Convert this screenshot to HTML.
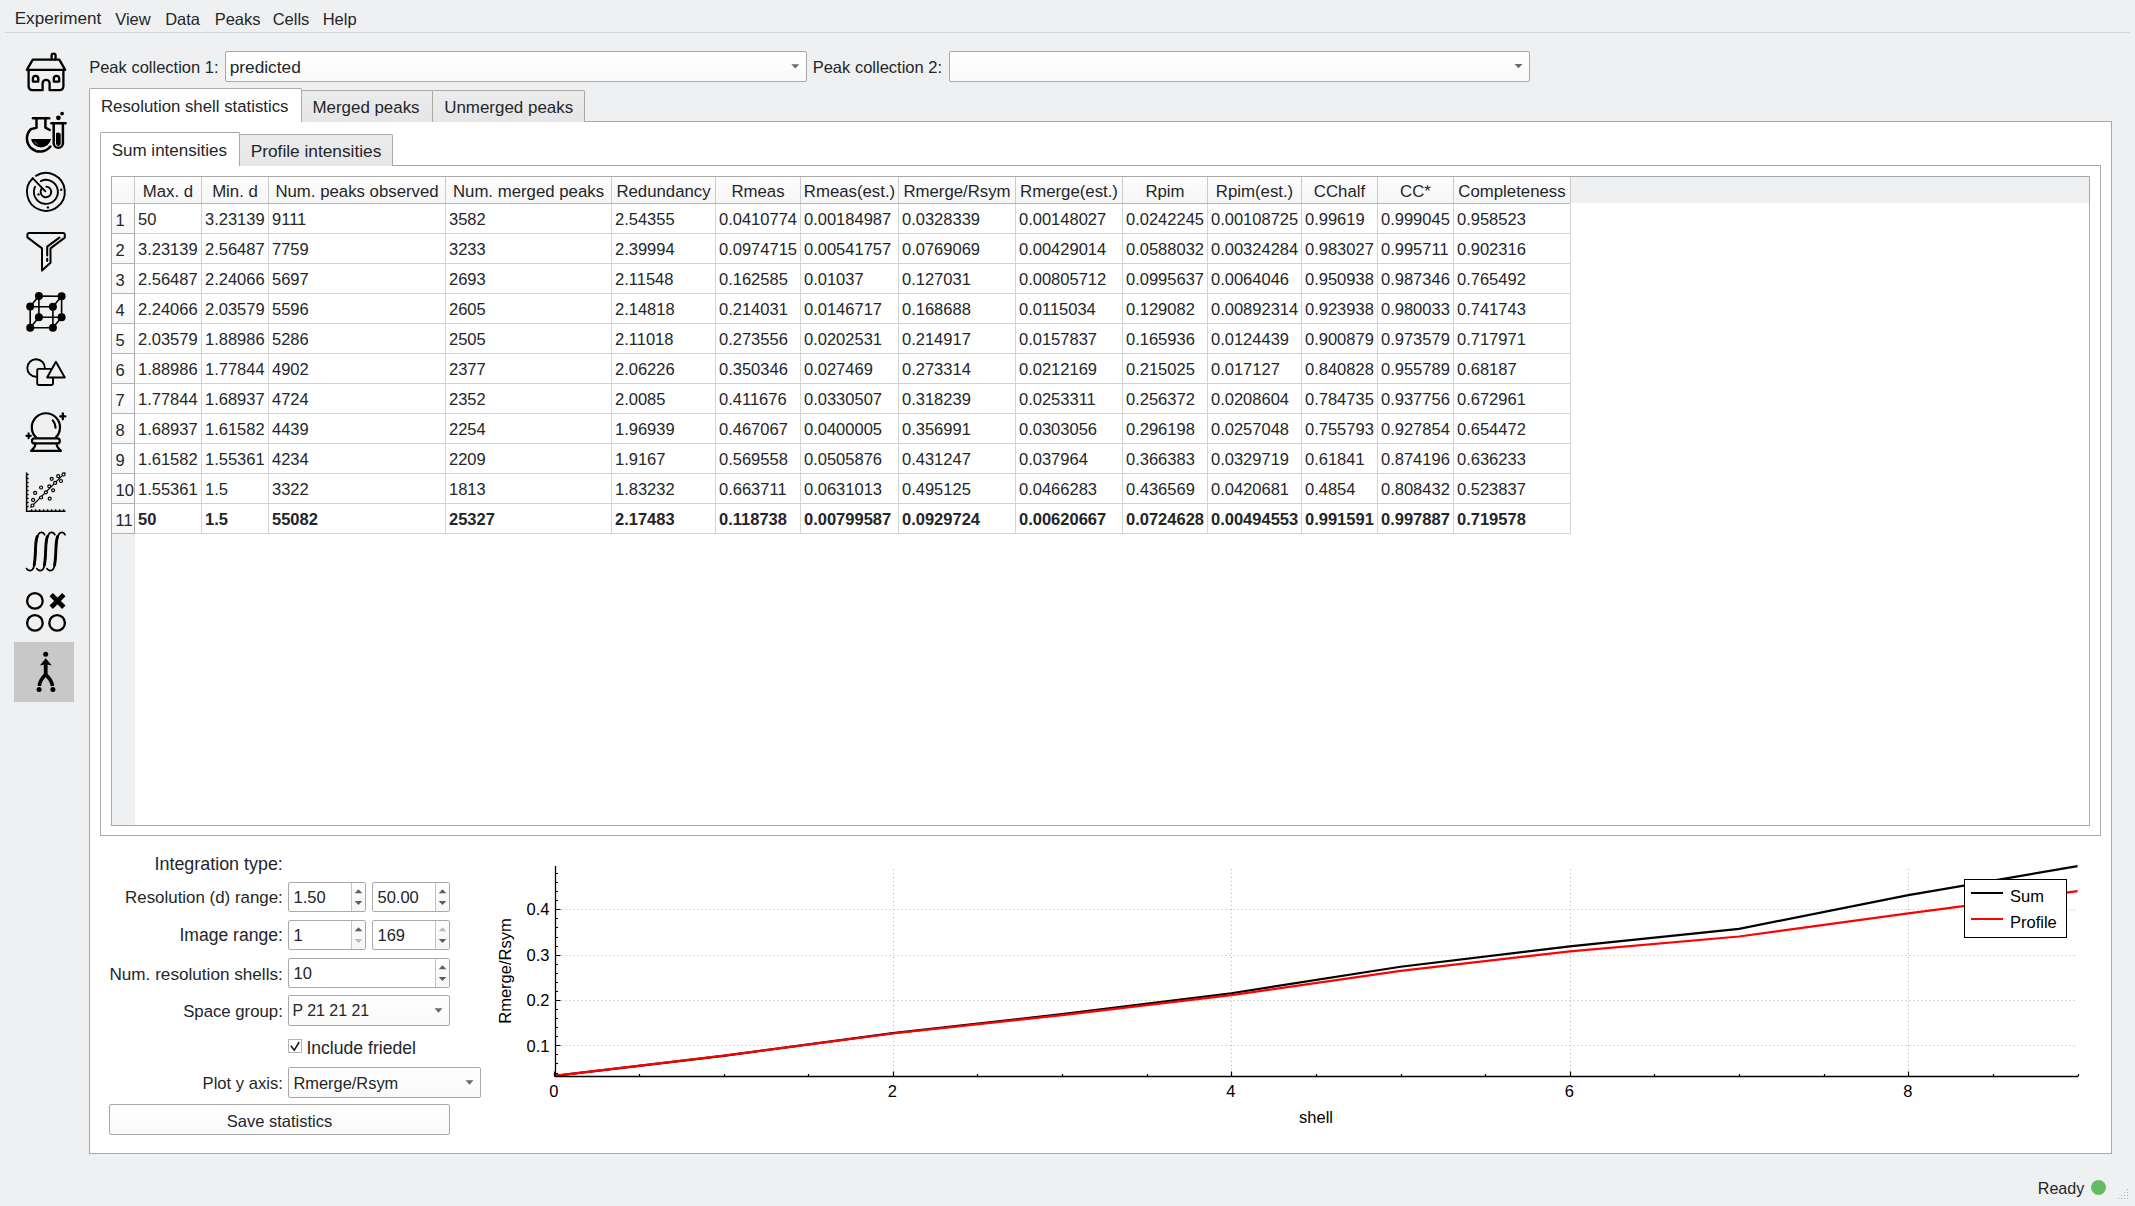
<!DOCTYPE html>
<html><head><meta charset="utf-8"><style>
html,body{margin:0;padding:0;}
body{width:2135px;height:1206px;position:relative;overflow:hidden;background:#eff0f1;font-family:"Liberation Sans",sans-serif;font-size:16.5px;color:#232629;}
.t{position:absolute;white-space:nowrap;line-height:20px;}
.combo{position:absolute;box-sizing:border-box;border:1px solid #a9a9a9;border-radius:2px;background:linear-gradient(#ffffff,#f9f9f9);}
.spin{position:absolute;box-sizing:border-box;border:1px solid #a9a9a9;border-radius:2px;background:#fff;}
.tab{position:absolute;box-sizing:border-box;border:1px solid #a9a9a9;border-bottom:none;border-radius:2px 2px 0 0;background:linear-gradient(#ececec,#e6e6e6);}
.tabsel{position:absolute;box-sizing:border-box;border:1px solid #a9a9a9;border-bottom:none;border-radius:2px 2px 0 0;background:#fff;}
</style></head><body>
<div class="t" style="left:14.70px;top:9.05px;font-size:17.1px;">Experiment</div>
<div class="t" style="left:115.20px;top:9.25px;">View</div>
<div class="t" style="left:165.20px;top:9.25px;">Data</div>
<div class="t" style="left:214.70px;top:9.25px;">Peaks</div>
<div class="t" style="left:272.70px;top:9.25px;">Cells</div>
<div class="t" style="left:322.70px;top:9.25px;">Help</div>
<div style="position:absolute;left:5px;top:32px;width:2125px;height:1px;background:#d5d6d7;"></div>
<div style="position:absolute;left:14px;top:642px;width:60px;height:60px;background:#c8c8c8;"></div>
<svg style="position:absolute;left:0;top:0;overflow:visible" width="90" height="720" viewBox="0 0 90 720"><g fill="none" stroke="#000" stroke-linecap="round" stroke-linejoin="round" stroke-width="2.3"><path d="M32.8 59.6 H59.3 L65.2 69.8 H26.8 Z"/><path d="M51.6 59.4 V55.6 A2 2 0 0 1 55.6 55.6 V59.4"/><path d="M28.6 70 V86.6 A3.6 3.6 0 0 0 32.2 90.2 H42.6 V83.3 A3.5 3.5 0 0 1 49.6 83.3 V90.2 H59.8 A3.6 3.6 0 0 0 63.4 86.6 V70"/><path d="M32.9 81.6 V78.6 A2.7 2.7 0 0 1 38.3 78.6 V81.6 Z"/><path d="M53.8 81.6 V78.6 A2.7 2.7 0 0 1 59.2 78.6 V81.6 Z"/></g><g fill="none" stroke="#000" stroke-linecap="round" stroke-linejoin="round" stroke-width="2.5"><path d="M33 118.2 H49.2"/><path d="M36.5 118.4 V127.7 L30.9 129.1 A13.1 13.1 0 1 0 50.4 146.5"/><path d="M45.4 118.4 V127.6 L49.8 130"/><path d="M51.4 123.2 H65.6"/><path d="M53.7 123.4 V143.2 A4.6 4.6 0 0 0 62.9 143.2 V123.4"/></g><path d="M31.1 138.9 H51 A10.06 10.06 0 0 1 31.1 138.9 Z" fill="#000"/><path d="M34.3 141.5 L37.6 144.5" stroke="#9a9a9a" stroke-width="0.8" fill="none"/><path d="M56 133.2 Q58 131.8 60.7 133.8 V143.6 A2.35 2.35 0 0 1 56 143.6 Z" fill="#000"/><circle cx="58.4" cy="117.8" r="2.4" fill="#000"/><circle cx="62.1" cy="113.6" r="1.9" fill="#000"/><g fill="none" stroke="#000" stroke-linecap="round" stroke-linejoin="round" stroke-width="1.9"><path d="M35.88 175.87 A18.9 18.9 0 1 1 32.77 178.30"/><path d="M40.83 181.02 A12 12 0 1 1 35.02 186.83"/><path d="M46.36 186.62 A5.3 5.3 0 1 1 41.41 189.09"/><path d="M32.6 178.2 L45.4 191.3"/></g><circle cx="61.2" cy="189.8" r="1.2" fill="#000"/><circle cx="38.5" cy="194.4" r="1.2" fill="#000"/><circle cx="47.9" cy="207.4" r="1.2" fill="#000"/><g fill="none" stroke="#000" stroke-linecap="round" stroke-linejoin="round" stroke-width="2"><path d="M28.8 233.1 H63.4 Q64.8 233.1 64.8 234.6 V237.6 L50.5 248.4 V262.8 L42 270.6 V248.4 L27.4 237.4 V234.6 Q27.4 233.1 28.8 233.1 Z"/><path d="M59.4 237.6 L47.2 246.6 V255.4"/><path d="M47.2 258.8 V261"/></g><path d="M38.9 296.1 L61.6 296.2 M30.2 306.6 L52.9 306.7 M38.9 296.1 L38.9 317.2 M30.2 306.6 L30.2 327.7 M61.6 296.2 L61.6 317.3 M52.9 306.7 L52.9 327.8 M38.9 317.2 L61.6 317.3 M30.2 327.7 L52.9 327.8 M38.9 296.1 L30.2 306.6 M61.6 296.2 L52.9 306.7 M38.9 317.2 L30.2 327.7 M61.6 317.3 L52.9 327.8" stroke="#000" stroke-width="1.6" fill="none"/><circle cx="38.9" cy="296.1" r="4" fill="#000"/><circle cx="61.6" cy="296.2" r="4" fill="#000"/><circle cx="38.9" cy="317.2" r="4" fill="#000"/><circle cx="61.6" cy="317.3" r="4" fill="#000"/><circle cx="30.2" cy="306.6" r="4" fill="#000"/><circle cx="52.9" cy="306.7" r="4" fill="#000"/><circle cx="30.2" cy="327.7" r="4" fill="#000"/><circle cx="52.9" cy="327.8" r="4" fill="#000"/><g fill="none" stroke="#000" stroke-linecap="round" stroke-linejoin="round" stroke-width="1.9"><path d="M36.1 376.8 A8.8 8.8 0 1 1 44.9 368.2"/><path d="M50.4 368.9 H38.6 Q37.2 368.9 37.2 370.3 V383.6 Q37.2 385 38.6 385 H51.6 Q53 385 53 383.6 V377.6"/><path d="M55.9 361.8 L64.8 377.5 H47.1 Z"/></g><g fill="none" stroke="#000" stroke-linecap="round" stroke-linejoin="round" stroke-width="2.2"><path d="M36.2 437.6 A14.1 14.1 0 1 1 55.6 437.6"/><rect x="32" y="438.4" width="27.8" height="5" rx="2.5"/><path d="M35.4 443.6 Q35.4 447.6 31 450.8 H61 Q56.6 447.6 56.6 443.6"/><path d="M52.8 420.4 Q55.2 423.2 55.6 427.6"/><path d="M62.8 413.3 V419.3 M60.2 416.3 H65.4" stroke-width="2.3"/><path d="M28.6 433.4 V438.3 M26.4 435.85 H30.8" stroke-width="2.1"/></g><path d="M26.6 472.4 V511.2 H65.6 M26.6 474.4 H28.6 M31.6 511 V509.2 M26.6 478.4 H28.6 M35.6 511 V509.2 M26.6 482.4 H28.6 M39.6 511 V509.2 M26.6 486.4 H28.6 M43.6 511 V509.2 M26.6 490.4 H28.6 M47.6 511 V509.2 M26.6 494.4 H28.6 M51.6 511 V509.2 M26.6 498.4 H28.6 M55.6 511 V509.2 M26.6 502.4 H28.6 M59.6 511 V509.2 M26.6 506.4 H28.6 M63.6 511 V509.2" stroke="#000" stroke-width="1.5" fill="none"/><path d="M30.4 507.6 L65.2 472.6" stroke="#000" stroke-width="1.3" fill="none"/><circle cx="32.5" cy="505.5" r="1.5" fill="#eff0f1" stroke="#000" stroke-width="1.2"/><circle cx="33.1" cy="499.9" r="1.5" fill="#eff0f1" stroke="#000" stroke-width="1.2"/><circle cx="35.1" cy="492.9" r="1.5" fill="#eff0f1" stroke="#000" stroke-width="1.2"/><circle cx="41.1" cy="487.5" r="1.5" fill="#eff0f1" stroke="#000" stroke-width="1.2"/><circle cx="41.1" cy="497.5" r="1.5" fill="#eff0f1" stroke="#000" stroke-width="1.2"/><circle cx="45.9" cy="492.3" r="1.5" fill="#eff0f1" stroke="#000" stroke-width="1.2"/><circle cx="49.3" cy="486.3" r="1.5" fill="#eff0f1" stroke="#000" stroke-width="1.2"/><circle cx="49.7" cy="498.7" r="1.5" fill="#eff0f1" stroke="#000" stroke-width="1.2"/><circle cx="51.7" cy="478.8" r="1.5" fill="#eff0f1" stroke="#000" stroke-width="1.2"/><circle cx="53.1" cy="490.3" r="1.5" fill="#eff0f1" stroke="#000" stroke-width="1.2"/><circle cx="55.1" cy="482.9" r="1.5" fill="#eff0f1" stroke="#000" stroke-width="1.2"/><circle cx="58.2" cy="476.2" r="1.5" fill="#eff0f1" stroke="#000" stroke-width="1.2"/><circle cx="61" cy="481" r="1.5" fill="#eff0f1" stroke="#000" stroke-width="1.2"/><circle cx="63.6" cy="474.4" r="1.5" fill="#eff0f1" stroke="#000" stroke-width="1.2"/><g fill="none" stroke="#000" stroke-linecap="round"><path transform="translate(0 0)" d="M26.6 568.6 C27.8 570.6 30.8 571.4 32.6 569.4 C34.6 567 35.2 561 35.5 552 C35.8 543 36.4 537.2 38.6 534 C40.4 531.6 43.2 531.8 44.6 534.6" stroke-width="1.8"/><path transform="translate(0 0)" d="M34.2 565 C35.1 560 35.4 553 35.6 547 C35.8 542 36.3 539 37.2 536.6" stroke-width="2.9"/><path transform="translate(10.2 0)" d="M26.6 568.6 C27.8 570.6 30.8 571.4 32.6 569.4 C34.6 567 35.2 561 35.5 552 C35.8 543 36.4 537.2 38.6 534 C40.4 531.6 43.2 531.8 44.6 534.6" stroke-width="1.8"/><path transform="translate(10.2 0)" d="M34.2 565 C35.1 560 35.4 553 35.6 547 C35.8 542 36.3 539 37.2 536.6" stroke-width="2.9"/><path transform="translate(20.4 0)" d="M26.6 568.6 C27.8 570.6 30.8 571.4 32.6 569.4 C34.6 567 35.2 561 35.5 552 C35.8 543 36.4 537.2 38.6 534 C40.4 531.6 43.2 531.8 44.6 534.6" stroke-width="1.8"/><path transform="translate(20.4 0)" d="M34.2 565 C35.1 560 35.4 553 35.6 547 C35.8 542 36.3 539 37.2 536.6" stroke-width="2.9"/></g><g fill="none" stroke="#000" stroke-width="2.3"><circle cx="34.9" cy="600.9" r="7.8"/><circle cx="34.9" cy="622.9" r="7.8"/><circle cx="57.1" cy="622.9" r="7.8"/></g><path d="M51.2 594.6 L63.8 607.2 M63.8 594.6 L51.2 607.2" stroke="#000" stroke-width="4.8" fill="none"/><circle cx="45.7" cy="654.3" r="2.5" fill="#000"/><path d="M45.7 658.2 L51.8 665.4 L45.7 664.2 L39.9 665.4 Z" fill="#000"/><path d="M45.7 663.5 V676.5" stroke="#000" stroke-width="3.8" fill="none"/><path d="M45.7 674.6 Q39.6 680 39.4 686 M45.7 674.6 Q51.8 680 52.4 686" stroke="#000" stroke-width="3.6" fill="none"/><circle cx="39.1" cy="689.4" r="2.5" fill="#000"/><circle cx="52.9" cy="689.4" r="2.5" fill="#000"/></svg>
<div class="t" style="left:89.20px;top:56.85px;">Peak collection 1:</div>
<div class="combo" style="left:225px;top:51px;width:582px;height:31px;"></div>
<div class="t" style="left:229.70px;top:57.28px;font-size:17.3px;">predicted</div>
<div class="t" style="left:812.70px;top:56.85px;">Peak collection 2:</div>
<div class="combo" style="left:949px;top:51px;width:581px;height:31px;"></div>
<svg style="position:absolute;left:0;top:0;overflow:visible" width="1" height="1"><path d="M791.3 64.2 L799.3 64.2 L795.3 68.5 Z" fill="#6a6a6a"/><path d="M1514.5 64 L1522.5 64 L1518.5 68.3 Z" fill="#6a6a6a"/></svg>
<div style="position:absolute;left:89px;top:121px;width:2023px;height:1033px;box-sizing:border-box;border:1px solid #a9a9a9;background:#fff;"></div>
<div class="tab" style="left:301px;top:90px;width:132px;height:32px;"></div>
<div class="tab" style="left:432px;top:90px;width:153px;height:32px;"></div>
<div class="tabsel" style="left:89px;top:88px;width:213px;height:34px;"></div>
<div class="t" style="left:101.00px;top:96.75px;font-size:16.8px;">Resolution shell statistics</div>
<div class="t" style="left:312.50px;top:97.71px;font-size:16.9px;">Merged peaks</div>
<div class="t" style="left:444.20px;top:97.70px;font-size:16.95px;">Unmerged peaks</div>
<div style="position:absolute;left:100px;top:165px;width:2001px;height:671px;box-sizing:border-box;border:1px solid #a9a9a9;background:#fff;"></div>
<div class="tab" style="left:239px;top:134px;width:154px;height:32px;"></div>
<div class="tabsel" style="left:100px;top:132px;width:140px;height:34px;"></div>
<div class="t" style="left:111.70px;top:140.98px;font-size:17px;">Sum intensities</div>
<div class="t" style="left:250.70px;top:141.28px;font-size:17.3px;">Profile intensities</div>
<div style="position:absolute;left:111px;top:176px;width:1979px;height:650px;box-sizing:border-box;border:1px solid #a9a9a9;background:#fff;"></div>
<div style="position:absolute;left:112px;top:177px;width:1977px;height:26px;background:#eff0f1;"></div>
<div style="position:absolute;left:112px;top:534px;width:23px;height:291px;background:#eff0f1;"></div>
<div style="position:absolute;left:112px;top:177px;width:23px;height:26px;box-sizing:border-box;background:linear-gradient(#fdfdfd,#f6f6f6);border-right:1px solid #cbcbcb;"></div>
<div style="position:absolute;left:135px;top:177px;width:67px;height:26px;box-sizing:border-box;background:linear-gradient(#fdfdfd,#f6f6f6);border-right:1px solid #cbcbcb;"></div>
<div style="position:absolute;left:202px;top:177px;width:67px;height:26px;box-sizing:border-box;background:linear-gradient(#fdfdfd,#f6f6f6);border-right:1px solid #cbcbcb;"></div>
<div style="position:absolute;left:269px;top:177px;width:177px;height:26px;box-sizing:border-box;background:linear-gradient(#fdfdfd,#f6f6f6);border-right:1px solid #cbcbcb;"></div>
<div style="position:absolute;left:446px;top:177px;width:166px;height:26px;box-sizing:border-box;background:linear-gradient(#fdfdfd,#f6f6f6);border-right:1px solid #cbcbcb;"></div>
<div style="position:absolute;left:612px;top:177px;width:104px;height:26px;box-sizing:border-box;background:linear-gradient(#fdfdfd,#f6f6f6);border-right:1px solid #cbcbcb;"></div>
<div style="position:absolute;left:716px;top:177px;width:85px;height:26px;box-sizing:border-box;background:linear-gradient(#fdfdfd,#f6f6f6);border-right:1px solid #cbcbcb;"></div>
<div style="position:absolute;left:801px;top:177px;width:98px;height:26px;box-sizing:border-box;background:linear-gradient(#fdfdfd,#f6f6f6);border-right:1px solid #cbcbcb;"></div>
<div style="position:absolute;left:899px;top:177px;width:117px;height:26px;box-sizing:border-box;background:linear-gradient(#fdfdfd,#f6f6f6);border-right:1px solid #cbcbcb;"></div>
<div style="position:absolute;left:1016px;top:177px;width:107px;height:26px;box-sizing:border-box;background:linear-gradient(#fdfdfd,#f6f6f6);border-right:1px solid #cbcbcb;"></div>
<div style="position:absolute;left:1123px;top:177px;width:85px;height:26px;box-sizing:border-box;background:linear-gradient(#fdfdfd,#f6f6f6);border-right:1px solid #cbcbcb;"></div>
<div style="position:absolute;left:1208px;top:177px;width:94px;height:26px;box-sizing:border-box;background:linear-gradient(#fdfdfd,#f6f6f6);border-right:1px solid #cbcbcb;"></div>
<div style="position:absolute;left:1302px;top:177px;width:76px;height:26px;box-sizing:border-box;background:linear-gradient(#fdfdfd,#f6f6f6);border-right:1px solid #cbcbcb;"></div>
<div style="position:absolute;left:1378px;top:177px;width:76px;height:26px;box-sizing:border-box;background:linear-gradient(#fdfdfd,#f6f6f6);border-right:1px solid #cbcbcb;"></div>
<div style="position:absolute;left:1454px;top:177px;width:117px;height:26px;box-sizing:border-box;background:linear-gradient(#fdfdfd,#f6f6f6);border-right:1px solid #cbcbcb;"></div>
<div style="position:absolute;left:112px;top:203px;width:1458px;height:1px;background:#b5b5b5;"></div>
<div style="position:absolute;left:112px;top:204px;width:22px;height:29px;background:linear-gradient(#fefefe,#f7f7f7);"></div>
<div style="position:absolute;left:112px;top:233px;width:22px;height:1px;background:#b5b5b5;"></div>
<div class="t" style="left:115.50px;top:210.15px;">1</div>
<div style="position:absolute;left:112px;top:234px;width:22px;height:29px;background:linear-gradient(#fefefe,#f7f7f7);"></div>
<div style="position:absolute;left:112px;top:263px;width:22px;height:1px;background:#b5b5b5;"></div>
<div class="t" style="left:115.50px;top:240.15px;">2</div>
<div style="position:absolute;left:112px;top:264px;width:22px;height:29px;background:linear-gradient(#fefefe,#f7f7f7);"></div>
<div style="position:absolute;left:112px;top:293px;width:22px;height:1px;background:#b5b5b5;"></div>
<div class="t" style="left:115.50px;top:270.15px;">3</div>
<div style="position:absolute;left:112px;top:294px;width:22px;height:29px;background:linear-gradient(#fefefe,#f7f7f7);"></div>
<div style="position:absolute;left:112px;top:323px;width:22px;height:1px;background:#b5b5b5;"></div>
<div class="t" style="left:115.50px;top:300.15px;">4</div>
<div style="position:absolute;left:112px;top:324px;width:22px;height:29px;background:linear-gradient(#fefefe,#f7f7f7);"></div>
<div style="position:absolute;left:112px;top:353px;width:22px;height:1px;background:#b5b5b5;"></div>
<div class="t" style="left:115.50px;top:330.15px;">5</div>
<div style="position:absolute;left:112px;top:354px;width:22px;height:29px;background:linear-gradient(#fefefe,#f7f7f7);"></div>
<div style="position:absolute;left:112px;top:383px;width:22px;height:1px;background:#b5b5b5;"></div>
<div class="t" style="left:115.50px;top:360.15px;">6</div>
<div style="position:absolute;left:112px;top:384px;width:22px;height:29px;background:linear-gradient(#fefefe,#f7f7f7);"></div>
<div style="position:absolute;left:112px;top:413px;width:22px;height:1px;background:#b5b5b5;"></div>
<div class="t" style="left:115.50px;top:390.15px;">7</div>
<div style="position:absolute;left:112px;top:414px;width:22px;height:29px;background:linear-gradient(#fefefe,#f7f7f7);"></div>
<div style="position:absolute;left:112px;top:443px;width:22px;height:1px;background:#b5b5b5;"></div>
<div class="t" style="left:115.50px;top:420.15px;">8</div>
<div style="position:absolute;left:112px;top:444px;width:22px;height:29px;background:linear-gradient(#fefefe,#f7f7f7);"></div>
<div style="position:absolute;left:112px;top:473px;width:22px;height:1px;background:#b5b5b5;"></div>
<div class="t" style="left:115.50px;top:450.15px;">9</div>
<div style="position:absolute;left:112px;top:474px;width:22px;height:29px;background:linear-gradient(#fefefe,#f7f7f7);"></div>
<div style="position:absolute;left:112px;top:503px;width:22px;height:1px;background:#b5b5b5;"></div>
<div class="t" style="left:115.50px;top:480.15px;">10</div>
<div style="position:absolute;left:112px;top:504px;width:22px;height:29px;background:linear-gradient(#fefefe,#f7f7f7);"></div>
<div style="position:absolute;left:112px;top:533px;width:22px;height:1px;background:#b5b5b5;"></div>
<div class="t" style="left:115.50px;top:510.15px;">11</div>
<div style="position:absolute;left:134px;top:204px;width:1px;height:330px;background:#ababab;"></div>
<div style="position:absolute;left:135px;top:233px;width:1435px;height:1px;background:#d3d3d3;"></div>
<div style="position:absolute;left:135px;top:263px;width:1435px;height:1px;background:#d3d3d3;"></div>
<div style="position:absolute;left:135px;top:293px;width:1435px;height:1px;background:#d3d3d3;"></div>
<div style="position:absolute;left:135px;top:323px;width:1435px;height:1px;background:#d3d3d3;"></div>
<div style="position:absolute;left:135px;top:353px;width:1435px;height:1px;background:#d3d3d3;"></div>
<div style="position:absolute;left:135px;top:383px;width:1435px;height:1px;background:#d3d3d3;"></div>
<div style="position:absolute;left:135px;top:413px;width:1435px;height:1px;background:#d3d3d3;"></div>
<div style="position:absolute;left:135px;top:443px;width:1435px;height:1px;background:#d3d3d3;"></div>
<div style="position:absolute;left:135px;top:473px;width:1435px;height:1px;background:#d3d3d3;"></div>
<div style="position:absolute;left:135px;top:503px;width:1435px;height:1px;background:#d3d3d3;"></div>
<div style="position:absolute;left:135px;top:533px;width:1435px;height:1px;background:#d3d3d3;"></div>
<div style="position:absolute;left:201px;top:204px;width:1px;height:330px;background:#d3d3d3;"></div>
<div style="position:absolute;left:268px;top:204px;width:1px;height:330px;background:#d3d3d3;"></div>
<div style="position:absolute;left:445px;top:204px;width:1px;height:330px;background:#d3d3d3;"></div>
<div style="position:absolute;left:611px;top:204px;width:1px;height:330px;background:#d3d3d3;"></div>
<div style="position:absolute;left:715px;top:204px;width:1px;height:330px;background:#d3d3d3;"></div>
<div style="position:absolute;left:800px;top:204px;width:1px;height:330px;background:#d3d3d3;"></div>
<div style="position:absolute;left:898px;top:204px;width:1px;height:330px;background:#d3d3d3;"></div>
<div style="position:absolute;left:1015px;top:204px;width:1px;height:330px;background:#d3d3d3;"></div>
<div style="position:absolute;left:1122px;top:204px;width:1px;height:330px;background:#d3d3d3;"></div>
<div style="position:absolute;left:1207px;top:204px;width:1px;height:330px;background:#d3d3d3;"></div>
<div style="position:absolute;left:1301px;top:204px;width:1px;height:330px;background:#d3d3d3;"></div>
<div style="position:absolute;left:1377px;top:204px;width:1px;height:330px;background:#d3d3d3;"></div>
<div style="position:absolute;left:1453px;top:204px;width:1px;height:330px;background:#d3d3d3;"></div>
<div style="position:absolute;left:1570px;top:204px;width:1px;height:330px;background:#d3d3d3;"></div>
<div class="t" style="left:-132.00px;width:600px;text-align:center;top:181.65px;font-size:16.8px;">Max. d</div>
<div class="t" style="left:-65.00px;width:600px;text-align:center;top:181.65px;font-size:16.8px;">Min. d</div>
<div class="t" style="left:57.00px;width:600px;text-align:center;top:181.65px;font-size:16.8px;">Num. peaks observed</div>
<div class="t" style="left:228.50px;width:600px;text-align:center;top:181.65px;font-size:16.8px;">Num. merged peaks</div>
<div class="t" style="left:363.50px;width:600px;text-align:center;top:181.65px;font-size:16.8px;">Redundancy</div>
<div class="t" style="left:458.00px;width:600px;text-align:center;top:181.65px;font-size:16.8px;">Rmeas</div>
<div class="t" style="left:549.50px;width:600px;text-align:center;top:181.65px;font-size:16.8px;">Rmeas(est.)</div>
<div class="t" style="left:657.00px;width:600px;text-align:center;top:181.65px;font-size:16.8px;">Rmerge/Rsym</div>
<div class="t" style="left:769.00px;width:600px;text-align:center;top:181.65px;font-size:16.8px;">Rmerge(est.)</div>
<div class="t" style="left:865.00px;width:600px;text-align:center;top:181.65px;font-size:16.8px;">Rpim</div>
<div class="t" style="left:954.50px;width:600px;text-align:center;top:181.65px;font-size:16.8px;">Rpim(est.)</div>
<div class="t" style="left:1039.50px;width:600px;text-align:center;top:181.65px;font-size:16.8px;">CChalf</div>
<div class="t" style="left:1115.50px;width:600px;text-align:center;top:181.65px;font-size:16.8px;">CC*</div>
<div class="t" style="left:1212.00px;width:600px;text-align:center;top:181.65px;font-size:16.8px;">Completeness</div>
<div class="t" style="left:138.00px;top:209.35px;">50</div>
<div class="t" style="left:205.00px;top:209.35px;">3.23139</div>
<div class="t" style="left:272.00px;top:209.35px;">9111</div>
<div class="t" style="left:449.00px;top:209.35px;">3582</div>
<div class="t" style="left:615.00px;top:209.35px;">2.54355</div>
<div class="t" style="left:719.00px;top:209.35px;">0.0410774</div>
<div class="t" style="left:804.00px;top:209.35px;">0.00184987</div>
<div class="t" style="left:902.00px;top:209.35px;">0.0328339</div>
<div class="t" style="left:1019.00px;top:209.35px;">0.00148027</div>
<div class="t" style="left:1126.00px;top:209.35px;">0.0242245</div>
<div class="t" style="left:1211.00px;top:209.35px;">0.00108725</div>
<div class="t" style="left:1305.00px;top:209.35px;">0.99619</div>
<div class="t" style="left:1381.00px;top:209.35px;">0.999045</div>
<div class="t" style="left:1457.00px;top:209.35px;">0.958523</div>
<div class="t" style="left:138.00px;top:239.35px;">3.23139</div>
<div class="t" style="left:205.00px;top:239.35px;">2.56487</div>
<div class="t" style="left:272.00px;top:239.35px;">7759</div>
<div class="t" style="left:449.00px;top:239.35px;">3233</div>
<div class="t" style="left:615.00px;top:239.35px;">2.39994</div>
<div class="t" style="left:719.00px;top:239.35px;">0.0974715</div>
<div class="t" style="left:804.00px;top:239.35px;">0.00541757</div>
<div class="t" style="left:902.00px;top:239.35px;">0.0769069</div>
<div class="t" style="left:1019.00px;top:239.35px;">0.00429014</div>
<div class="t" style="left:1126.00px;top:239.35px;">0.0588032</div>
<div class="t" style="left:1211.00px;top:239.35px;">0.00324284</div>
<div class="t" style="left:1305.00px;top:239.35px;">0.983027</div>
<div class="t" style="left:1381.00px;top:239.35px;">0.995711</div>
<div class="t" style="left:1457.00px;top:239.35px;">0.902316</div>
<div class="t" style="left:138.00px;top:269.35px;">2.56487</div>
<div class="t" style="left:205.00px;top:269.35px;">2.24066</div>
<div class="t" style="left:272.00px;top:269.35px;">5697</div>
<div class="t" style="left:449.00px;top:269.35px;">2693</div>
<div class="t" style="left:615.00px;top:269.35px;">2.11548</div>
<div class="t" style="left:719.00px;top:269.35px;">0.162585</div>
<div class="t" style="left:804.00px;top:269.35px;">0.01037</div>
<div class="t" style="left:902.00px;top:269.35px;">0.127031</div>
<div class="t" style="left:1019.00px;top:269.35px;">0.00805712</div>
<div class="t" style="left:1126.00px;top:269.35px;">0.0995637</div>
<div class="t" style="left:1211.00px;top:269.35px;">0.0064046</div>
<div class="t" style="left:1305.00px;top:269.35px;">0.950938</div>
<div class="t" style="left:1381.00px;top:269.35px;">0.987346</div>
<div class="t" style="left:1457.00px;top:269.35px;">0.765492</div>
<div class="t" style="left:138.00px;top:299.35px;">2.24066</div>
<div class="t" style="left:205.00px;top:299.35px;">2.03579</div>
<div class="t" style="left:272.00px;top:299.35px;">5596</div>
<div class="t" style="left:449.00px;top:299.35px;">2605</div>
<div class="t" style="left:615.00px;top:299.35px;">2.14818</div>
<div class="t" style="left:719.00px;top:299.35px;">0.214031</div>
<div class="t" style="left:804.00px;top:299.35px;">0.0146717</div>
<div class="t" style="left:902.00px;top:299.35px;">0.168688</div>
<div class="t" style="left:1019.00px;top:299.35px;">0.0115034</div>
<div class="t" style="left:1126.00px;top:299.35px;">0.129082</div>
<div class="t" style="left:1211.00px;top:299.35px;">0.00892314</div>
<div class="t" style="left:1305.00px;top:299.35px;">0.923938</div>
<div class="t" style="left:1381.00px;top:299.35px;">0.980033</div>
<div class="t" style="left:1457.00px;top:299.35px;">0.741743</div>
<div class="t" style="left:138.00px;top:329.35px;">2.03579</div>
<div class="t" style="left:205.00px;top:329.35px;">1.88986</div>
<div class="t" style="left:272.00px;top:329.35px;">5286</div>
<div class="t" style="left:449.00px;top:329.35px;">2505</div>
<div class="t" style="left:615.00px;top:329.35px;">2.11018</div>
<div class="t" style="left:719.00px;top:329.35px;">0.273556</div>
<div class="t" style="left:804.00px;top:329.35px;">0.0202531</div>
<div class="t" style="left:902.00px;top:329.35px;">0.214917</div>
<div class="t" style="left:1019.00px;top:329.35px;">0.0157837</div>
<div class="t" style="left:1126.00px;top:329.35px;">0.165936</div>
<div class="t" style="left:1211.00px;top:329.35px;">0.0124439</div>
<div class="t" style="left:1305.00px;top:329.35px;">0.900879</div>
<div class="t" style="left:1381.00px;top:329.35px;">0.973579</div>
<div class="t" style="left:1457.00px;top:329.35px;">0.717971</div>
<div class="t" style="left:138.00px;top:359.35px;">1.88986</div>
<div class="t" style="left:205.00px;top:359.35px;">1.77844</div>
<div class="t" style="left:272.00px;top:359.35px;">4902</div>
<div class="t" style="left:449.00px;top:359.35px;">2377</div>
<div class="t" style="left:615.00px;top:359.35px;">2.06226</div>
<div class="t" style="left:719.00px;top:359.35px;">0.350346</div>
<div class="t" style="left:804.00px;top:359.35px;">0.027469</div>
<div class="t" style="left:902.00px;top:359.35px;">0.273314</div>
<div class="t" style="left:1019.00px;top:359.35px;">0.0212169</div>
<div class="t" style="left:1126.00px;top:359.35px;">0.215025</div>
<div class="t" style="left:1211.00px;top:359.35px;">0.017127</div>
<div class="t" style="left:1305.00px;top:359.35px;">0.840828</div>
<div class="t" style="left:1381.00px;top:359.35px;">0.955789</div>
<div class="t" style="left:1457.00px;top:359.35px;">0.68187</div>
<div class="t" style="left:138.00px;top:389.35px;">1.77844</div>
<div class="t" style="left:205.00px;top:389.35px;">1.68937</div>
<div class="t" style="left:272.00px;top:389.35px;">4724</div>
<div class="t" style="left:449.00px;top:389.35px;">2352</div>
<div class="t" style="left:615.00px;top:389.35px;">2.0085</div>
<div class="t" style="left:719.00px;top:389.35px;">0.411676</div>
<div class="t" style="left:804.00px;top:389.35px;">0.0330507</div>
<div class="t" style="left:902.00px;top:389.35px;">0.318239</div>
<div class="t" style="left:1019.00px;top:389.35px;">0.0253311</div>
<div class="t" style="left:1126.00px;top:389.35px;">0.256372</div>
<div class="t" style="left:1211.00px;top:389.35px;">0.0208604</div>
<div class="t" style="left:1305.00px;top:389.35px;">0.784735</div>
<div class="t" style="left:1381.00px;top:389.35px;">0.937756</div>
<div class="t" style="left:1457.00px;top:389.35px;">0.672961</div>
<div class="t" style="left:138.00px;top:419.35px;">1.68937</div>
<div class="t" style="left:205.00px;top:419.35px;">1.61582</div>
<div class="t" style="left:272.00px;top:419.35px;">4439</div>
<div class="t" style="left:449.00px;top:419.35px;">2254</div>
<div class="t" style="left:615.00px;top:419.35px;">1.96939</div>
<div class="t" style="left:719.00px;top:419.35px;">0.467067</div>
<div class="t" style="left:804.00px;top:419.35px;">0.0400005</div>
<div class="t" style="left:902.00px;top:419.35px;">0.356991</div>
<div class="t" style="left:1019.00px;top:419.35px;">0.0303056</div>
<div class="t" style="left:1126.00px;top:419.35px;">0.296198</div>
<div class="t" style="left:1211.00px;top:419.35px;">0.0257048</div>
<div class="t" style="left:1305.00px;top:419.35px;">0.755793</div>
<div class="t" style="left:1381.00px;top:419.35px;">0.927854</div>
<div class="t" style="left:1457.00px;top:419.35px;">0.654472</div>
<div class="t" style="left:138.00px;top:449.35px;">1.61582</div>
<div class="t" style="left:205.00px;top:449.35px;">1.55361</div>
<div class="t" style="left:272.00px;top:449.35px;">4234</div>
<div class="t" style="left:449.00px;top:449.35px;">2209</div>
<div class="t" style="left:615.00px;top:449.35px;">1.9167</div>
<div class="t" style="left:719.00px;top:449.35px;">0.569558</div>
<div class="t" style="left:804.00px;top:449.35px;">0.0505876</div>
<div class="t" style="left:902.00px;top:449.35px;">0.431247</div>
<div class="t" style="left:1019.00px;top:449.35px;">0.037964</div>
<div class="t" style="left:1126.00px;top:449.35px;">0.366383</div>
<div class="t" style="left:1211.00px;top:449.35px;">0.0329719</div>
<div class="t" style="left:1305.00px;top:449.35px;">0.61841</div>
<div class="t" style="left:1381.00px;top:449.35px;">0.874196</div>
<div class="t" style="left:1457.00px;top:449.35px;">0.636233</div>
<div class="t" style="left:138.00px;top:479.35px;">1.55361</div>
<div class="t" style="left:205.00px;top:479.35px;">1.5</div>
<div class="t" style="left:272.00px;top:479.35px;">3322</div>
<div class="t" style="left:449.00px;top:479.35px;">1813</div>
<div class="t" style="left:615.00px;top:479.35px;">1.83232</div>
<div class="t" style="left:719.00px;top:479.35px;">0.663711</div>
<div class="t" style="left:804.00px;top:479.35px;">0.0631013</div>
<div class="t" style="left:902.00px;top:479.35px;">0.495125</div>
<div class="t" style="left:1019.00px;top:479.35px;">0.0466283</div>
<div class="t" style="left:1126.00px;top:479.35px;">0.436569</div>
<div class="t" style="left:1211.00px;top:479.35px;">0.0420681</div>
<div class="t" style="left:1305.00px;top:479.35px;">0.4854</div>
<div class="t" style="left:1381.00px;top:479.35px;">0.808432</div>
<div class="t" style="left:1457.00px;top:479.35px;">0.523837</div>
<div class="t" style="left:138.00px;top:509.35px;font-weight:bold;">50</div>
<div class="t" style="left:205.00px;top:509.35px;font-weight:bold;">1.5</div>
<div class="t" style="left:272.00px;top:509.35px;font-weight:bold;">55082</div>
<div class="t" style="left:449.00px;top:509.35px;font-weight:bold;">25327</div>
<div class="t" style="left:615.00px;top:509.35px;font-weight:bold;">2.17483</div>
<div class="t" style="left:719.00px;top:509.35px;font-weight:bold;">0.118738</div>
<div class="t" style="left:804.00px;top:509.35px;font-weight:bold;">0.00799587</div>
<div class="t" style="left:902.00px;top:509.35px;font-weight:bold;">0.0929724</div>
<div class="t" style="left:1019.00px;top:509.35px;font-weight:bold;">0.00620667</div>
<div class="t" style="left:1126.00px;top:509.35px;font-weight:bold;">0.0724628</div>
<div class="t" style="left:1211.00px;top:509.35px;font-weight:bold;">0.00494553</div>
<div class="t" style="left:1305.00px;top:509.35px;font-weight:bold;">0.991591</div>
<div class="t" style="left:1381.00px;top:509.35px;font-weight:bold;">0.997887</div>
<div class="t" style="left:1457.00px;top:509.35px;font-weight:bold;">0.719578</div>
<div class="t" style="right:1852.20px;top:854.08px;font-size:17.9px;">Integration type:</div>
<div class="t" style="right:1852.20px;top:887.91px;font-size:16.9px;">Resolution (d) range:</div>
<div class="t" style="right:1852.20px;top:925.00px;font-size:17.55px;">Image range:</div>
<div class="t" style="right:1852.20px;top:963.73px;font-size:17.15px;">Num. resolution shells:</div>
<div class="t" style="right:1852.20px;top:1001.66px;font-size:16.75px;">Space group:</div>
<div class="t" style="right:1852.20px;top:1073.71px;font-size:16.6px;">Plot y axis:</div>
<div class="spin" style="left:288px;top:882px;width:78px;height:30px;"></div>
<div style="position:absolute;left:351px;top:883px;width:14px;height:28px;background:linear-gradient(#fdfdfd,#f6f6f6);border-left:1px solid #c4c4c4;box-sizing:border-box;"></div>
<svg style="position:absolute;left:0;top:0;overflow:visible" width="1" height="1"><path d="M354.7 893.2 L358.5 889.2 L362.3 893.2 Z" fill="#5c5c5c"/><path d="M354.7 901 L358.5 905 L362.3 901 Z" fill="#5c5c5c"/></svg>
<div class="t" style="left:293.50px;top:887.25px;">1.50</div>
<div class="spin" style="left:372px;top:882px;width:78px;height:30px;"></div>
<div style="position:absolute;left:435px;top:883px;width:14px;height:28px;background:linear-gradient(#fdfdfd,#f6f6f6);border-left:1px solid #c4c4c4;box-sizing:border-box;"></div>
<svg style="position:absolute;left:0;top:0;overflow:visible" width="1" height="1"><path d="M438.7 893.2 L442.5 889.2 L446.3 893.2 Z" fill="#5c5c5c"/><path d="M438.7 901 L442.5 905 L446.3 901 Z" fill="#5c5c5c"/></svg>
<div class="t" style="left:377.50px;top:887.25px;">50.00</div>
<div class="spin" style="left:288px;top:920px;width:78px;height:30px;"></div>
<div style="position:absolute;left:351px;top:921px;width:14px;height:28px;background:linear-gradient(#fdfdfd,#f6f6f6);border-left:1px solid #c4c4c4;box-sizing:border-box;"></div>
<svg style="position:absolute;left:0;top:0;overflow:visible" width="1" height="1"><path d="M354.7 931.2 L358.5 927.2 L362.3 931.2 Z" fill="#5c5c5c"/><path d="M354.7 939 L358.5 943 L362.3 939 Z" fill="#b9b9b9"/></svg>
<div class="t" style="left:293.50px;top:925.25px;">1</div>
<div class="spin" style="left:372px;top:920px;width:78px;height:30px;"></div>
<div style="position:absolute;left:435px;top:921px;width:14px;height:28px;background:linear-gradient(#fdfdfd,#f6f6f6);border-left:1px solid #c4c4c4;box-sizing:border-box;"></div>
<svg style="position:absolute;left:0;top:0;overflow:visible" width="1" height="1"><path d="M438.7 931.2 L442.5 927.2 L446.3 931.2 Z" fill="#b9b9b9"/><path d="M438.7 939 L442.5 943 L446.3 939 Z" fill="#5c5c5c"/></svg>
<div class="t" style="left:377.50px;top:925.25px;">169</div>
<div class="spin" style="left:288px;top:958px;width:162px;height:30px;"></div>
<div style="position:absolute;left:435px;top:959px;width:14px;height:28px;background:linear-gradient(#fdfdfd,#f6f6f6);border-left:1px solid #c4c4c4;box-sizing:border-box;"></div>
<svg style="position:absolute;left:0;top:0;overflow:visible" width="1" height="1"><path d="M438.7 969.2 L442.5 965.2 L446.3 969.2 Z" fill="#5c5c5c"/><path d="M438.7 977 L442.5 981 L446.3 977 Z" fill="#5c5c5c"/></svg>
<div class="t" style="left:293.50px;top:963.25px;">10</div>
<div class="combo" style="left:288px;top:995px;width:162px;height:31px;"></div>
<svg style="position:absolute;left:0;top:0;overflow:visible" width="1" height="1"><path d="M434.5 1008.3 L442.5 1008.3 L438.5 1012.8 Z" fill="#6a6a6a"/></svg>
<div class="t" style="left:292.50px;top:1001.25px;font-size:15.9px;">P 21 21 21</div>
<div class="combo" style="left:288px;top:1067px;width:193px;height:31px;"></div>
<svg style="position:absolute;left:0;top:0;overflow:visible" width="1" height="1"><path d="M465.5 1080.3 L473.5 1080.3 L469.5 1084.8 Z" fill="#6a6a6a"/></svg>
<div class="t" style="left:293.50px;top:1073.08px;font-size:16.4px;">Rmerge/Rsym</div>
<div style="position:absolute;left:288px;top:1039px;width:14px;height:14px;box-sizing:border-box;border:1px solid #b4b4b4;background:#fff;"></div>
<svg style="position:absolute;left:0;top:0;overflow:visible" width="1" height="1"><path d="M290.8 1045.8 L294.3 1050.2 L299.2 1042" fill="none" stroke="#1a1a1a" stroke-width="1.6"/></svg>
<div class="t" style="left:306.40px;top:1037.78px;font-size:17.6px;">Include friedel</div>
<div class="combo" style="left:109px;top:1104px;width:341px;height:31px;"></div>
<div class="t" style="left:-20.50px;width:600px;text-align:center;top:1110.55px;">Save statistics</div>
<svg style="position:absolute;left:0;top:0;overflow:visible" width="2135" height="1206" viewBox="0 0 2135 1206"><path d="M557.5 1045.5H2077.5 M557.5 1000.5H2077.5 M557.5 955.5H2077.5 M557.5 909.5H2077.5 M893.5 869V1075.5 M1231.5 869V1075.5 M1570.5 869V1075.5 M1908.5 869V1075.5" stroke="#b4b4b4" stroke-width="1" stroke-dasharray="1 3" fill="none"/><polyline points="554.30,1075.81 723.55,1055.82 892.80,1033.09 1062.05,1014.20 1231.30,993.24 1400.55,966.75 1569.80,946.38 1739.05,928.80 1908.30,895.13 2077.55,866.16" fill="none" stroke="#000" stroke-width="2.2"/><polyline points="554.30,1075.83 723.55,1055.69 892.80,1033.47 1062.05,1015.19 1231.30,995.19 1400.55,970.89 1569.80,951.38 1739.05,936.51 1908.30,913.38 2077.55,891.16" fill="none" stroke="#ff0000" stroke-width="2.2"/><path d="M555.5 866V1076.5 M555.0 1076.5H2078.0" stroke="#000" stroke-width="1.3" fill="none"/><path d="M554.5 1076.5V1071.5 M639.5 1076.5V1074.0 M724.5 1076.5V1074.0 M808.5 1076.5V1074.0 M893.5 1076.5V1071.5 M977.5 1076.5V1074.0 M1062.5 1076.5V1074.0 M1147.5 1076.5V1074.0 M1231.5 1076.5V1071.5 M1316.5 1076.5V1074.0 M1401.5 1076.5V1074.0 M1485.5 1076.5V1074.0 M1570.5 1076.5V1071.5 M1654.5 1076.5V1074.0 M1739.5 1076.5V1074.0 M1824.5 1076.5V1074.0 M1908.5 1076.5V1071.5 M1993.5 1076.5V1074.0 M2078.5 1076.5V1074.0 M555.5 1073.5H558.0 M555.5 1063.5H558.0 M555.5 1054.5H558.0 M555.5 1045.5H560.5 M555.5 1036.5H558.0 M555.5 1027.5H558.0 M555.5 1018.5H558.0 M555.5 1009.5H558.0 M555.5 1000.5H560.5 M555.5 991.5H558.0 M555.5 982.5H558.0 M555.5 973.5H558.0 M555.5 964.5H558.0 M555.5 955.5H560.5 M555.5 946.5H558.0 M555.5 937.5H558.0 M555.5 927.5H558.0 M555.5 918.5H558.0 M555.5 909.5H560.5 M555.5 900.5H558.0 M555.5 891.5H558.0 M555.5 882.5H558.0 M555.5 873.5H558.0" stroke="#000" stroke-width="1.2" fill="none"/></svg>
<div class="t" style="right:1585.50px;top:1035.50px;color:#000;">0.1</div>
<div class="t" style="right:1585.50px;top:990.15px;color:#000;">0.2</div>
<div class="t" style="right:1585.50px;top:944.80px;color:#000;">0.3</div>
<div class="t" style="right:1585.50px;top:899.45px;color:#000;">0.4</div>
<div class="t" style="left:253.80px;width:600px;text-align:center;top:1080.75px;color:#000;">0</div>
<div class="t" style="left:592.30px;width:600px;text-align:center;top:1080.75px;color:#000;">2</div>
<div class="t" style="left:930.80px;width:600px;text-align:center;top:1080.75px;color:#000;">4</div>
<div class="t" style="left:1269.30px;width:600px;text-align:center;top:1080.75px;color:#000;">6</div>
<div class="t" style="left:1607.80px;width:600px;text-align:center;top:1080.75px;color:#000;">8</div>
<div class="t" style="left:1016.00px;width:600px;text-align:center;top:1106.55px;color:#000;">shell</div>
<div class="t" style="left:404.5px;top:961px;width:200px;text-align:center;color:#000;transform:rotate(-90deg);">Rmerge/Rsym</div>
<div style="position:absolute;left:1964px;top:879px;width:103px;height:59px;box-sizing:border-box;border:1px solid #000;background:#fff;"></div>
<div style="position:absolute;left:1971px;top:892px;width:32px;height:2px;background:#000;"></div>
<div style="position:absolute;left:1971px;top:918px;width:32px;height:2px;background:#f00;"></div>
<div class="t" style="left:2010.00px;top:886.35px;color:#000;">Sum</div>
<div class="t" style="left:2010.00px;top:912.05px;color:#000;">Profile</div>
<div class="t" style="left:2037.80px;top:1177.68px;font-size:16.1px;">Ready</div>
<svg style="position:absolute;left:0;top:0;overflow:visible" width="1" height="1"><g fill="#b0b0b0"><rect x="2127" y="1189" width="1" height="1"/><rect x="2124" y="1192" width="1" height="1"/><rect x="2127" y="1192" width="1" height="1"/><rect x="2121" y="1195" width="1" height="1"/><rect x="2124" y="1195" width="1" height="1"/><rect x="2127" y="1195" width="1" height="1"/><rect x="2118" y="1198" width="1" height="1"/><rect x="2121" y="1198" width="1" height="1"/><rect x="2124" y="1198" width="1" height="1"/><rect x="2127" y="1198" width="1" height="1"/></g></svg>
<div style="position:absolute;left:2091px;top:1180px;width:15px;height:15px;border-radius:50%;background:#65bb62;"></div>
</body></html>
